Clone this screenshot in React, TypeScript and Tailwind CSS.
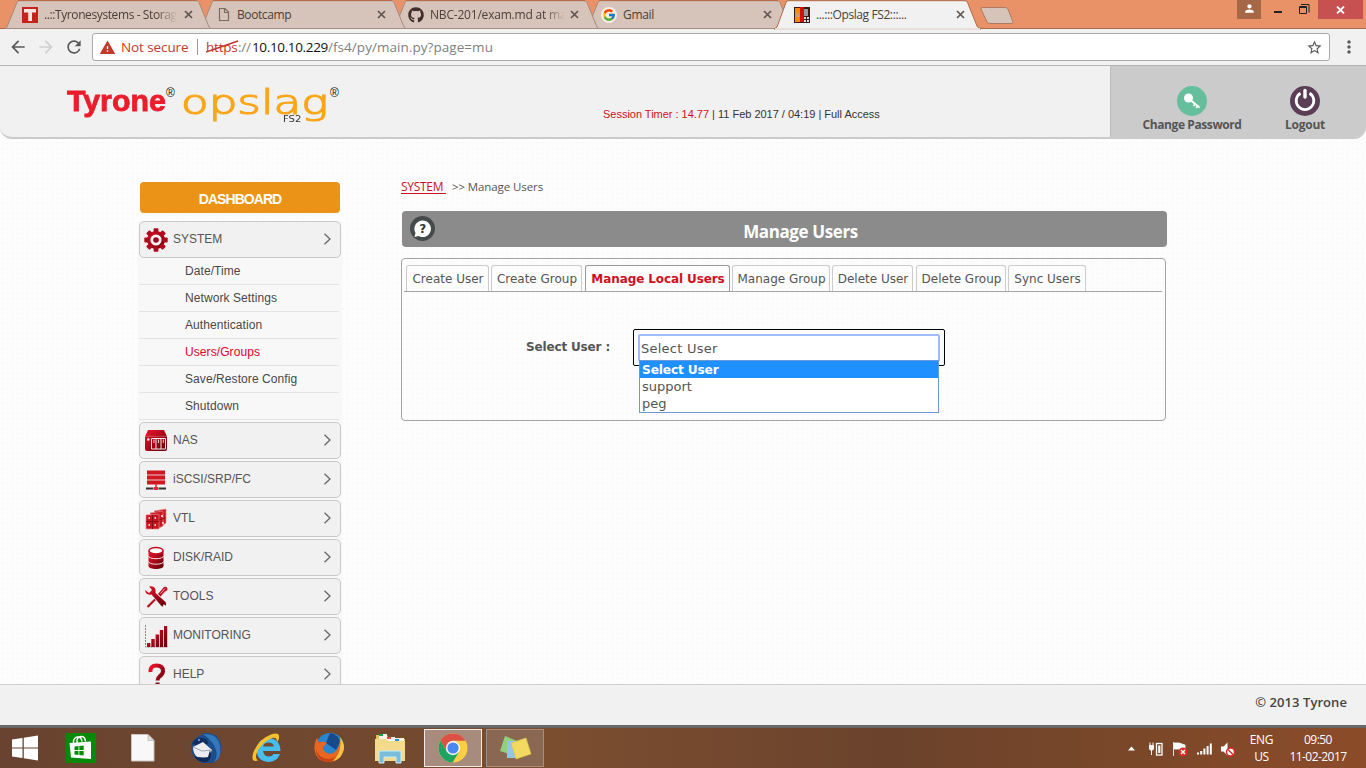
import React from "react";
import { MdArrowBack, MdArrowForward, MdRefresh, MdWarning, MdStarBorder, MdMoreVert, MdPerson } from "react-icons/md";
import { FaGithub } from "react-icons/fa";
import { FcGoogle } from "react-icons/fc";

const ui = "font-['Open_Sans','Noto_Sans',sans-serif]";
const arial = "font-['Liberation_Sans',Arial,sans-serif]";
const verdana = "font-['DejaVu_Sans',Verdana,sans-serif]";

function CloseX() {
  return (
    <svg width="9" height="9" viewBox="0 0 9 9" className="shrink-0">
      <path d="M1 1l7 7M8 1l-7 7" stroke="#5f5551" strokeWidth="1.7" />
    </svg>
  );
}

function PageIcon() {
  return (
    <svg width="12" height="15" viewBox="0 0 12 15">
      <path d="M1.5 1.5h5.5l3.5 3.5v8.500h-9zM6.500 1.500v4h4" fill="none" stroke="#7c6b64" strokeWidth="1.2" />
    </svg>
  );
}

function TyroneFav() {
  return (
    <svg width="16" height="16" viewBox="0 0 16 16">
      <rect width="16" height="16" fill="#c5221b" />
      <path d="M2 2h12v3.500h-4V14H6.200V5.500H2z" fill="#f6e6e0" />
    </svg>
  );
}

function OpslagFav() {
  return (
    <svg width="16" height="16" viewBox="0 0 16 16">
      <rect width="16" height="16" fill="#3a1a14" />
      <rect x="1" y="1" width="5" height="14" fill="#f58a10" />
      <rect x="2.500" y="6" width="2" height="4" fill="#a8a8a8" />
      <path d="M6 0h4v15H6z" fill="#d01010" />
      <rect x="10" y="2" width="4" height="7" fill="#999" />
      <path d="M10 10h5v5h-5z" fill="#ddd" />
      <path d="M10 12.500h5M12.500 10v5" stroke="#222" strokeWidth="1" />
    </svg>
  );
}

type TabProps = { icon: React.ReactNode; title: string; width: string; layer: string; fade?: boolean; active?: boolean; tail: string; text?: string };

function BrowserTab({ icon, title, width, layer, fade, active, tail, text }: TabProps) {
  return (
    <div className={`relative h-[29px] shrink-0 ${width} ${layer}`}>
      <svg className="absolute top-0 left-[-8px] overflow-visible" width="210" height="29" viewBox="0 0 210 29">
        <path
          d={active ? "M0 29L3 27L12 2.500Q12.500 .7 14 .7H191Q193 .7 193.500 2.500L203 26Q204 28.500 207 28.500V29Z" : "M5 28.500L7 27L17 2.500Q17.500 .7 19 .7H196Q198 .7 199 2.500L209 27L211 28.500Z"}
          fill={active ? "#f1f1f1" : "#d6c3b9"}
          stroke={active ? "#b06a48" : "#a78b7e"}
        />
        {active ? <path d="M1 29H206" stroke="#f1f1f1" strokeWidth="1.600" /> : <path d="M18 .5H197" stroke="#bd6c4a" />}
      </svg>
      <div className="relative flex h-[29px] items-center pl-[14px]">
        <span className="flex w-[20px] shrink-0">{icon}</span>
        <span className={`w-[135px] shrink-0 overflow-hidden text-[12px] whitespace-pre text-[#4a3f3a] ${ui} ${text ?? ""} ${fade ? "[mask-image:linear-gradient(to_right,black_85%,transparent)]" : ""}`}>{title}</span>
        <span className={`flex ${tail}`}>
          <CloseX />
        </span>
      </div>
    </div>
  );
}

function BrowserTabs() {
  return (
    <div className="relative z-0 flex h-[29px] shrink-0 justify-between bg-[#e99167] shadow-[inset_0_-1px_0_#a5694c]">
      <div className="flex pl-[8px]">
        <BrowserTab width="w-[195px]" layer="z-[4]" icon={<TyroneFav />} title="..::Tyronesystems - Storag" fade tail="pl-[7px]" text="pl-[2px] tracking-[-0.4px]" />
        <BrowserTab width="w-[193px]" layer="z-[3]" icon={<span className="pl-px"><PageIcon /></span>} title="Bootcamp" tail="pl-[5px]" text="tracking-[-0.4px]" />
        <BrowserTab width="w-[193px]" layer="z-[2]" icon={<span className="-ml-[2px]"><FaGithub size={16} color="#402f28" /></span>} title="NBC-201/exam.md at ma" fade tail="pl-[5px]" text="tracking-[-0.2px]" />
        <BrowserTab width="w-[193px]" layer="z-[1]" icon={<span className="-ml-[2px] rounded-full bg-[#f7ece6] p-px"><FcGoogle size={14} /></span>} title="Gmail" tail="pl-[5px]" text="tracking-[-0.3px]" />
        <BrowserTab width="w-[197px]" layer="z-10" icon={<span className="-ml-[2px]"><OpslagFav /></span>} title="...:::Opslag FS2:::..." active tail="pl-[5px]" text="tracking-[-0.400px]" />
        <svg width="36" height="29" viewBox="0 0 36 29">
          <path d="M3 7.500H26Q28 7.500 29 9L34 22Q34 23.500 32 23.500H11Q9 23.500 8 22L2 9Q1.500 7.500 3 7.500Z" fill="#d6c3b9" stroke="#b07b61" />
        </svg>
      </div>
      <div className="flex pr-[3px]">
        <div className="flex h-[19px] w-[24px] items-center justify-center bg-[#a66746]">
          <MdPerson size={13} color="#fff" className="-mt-[2px]" />
        </div>
        <svg width="57" height="20" viewBox="0 0 57 20">
          <path d="M13 12h8" stroke="#222" strokeWidth="2" />
          <path d="M38.500 6.500h7v7h-7zM38 7.500h8M40 4.500h8v8" fill="none" stroke="#222" />
        </svg>
        <div className="flex h-[19px] w-[45px] items-center justify-center bg-[#c75050]">
          <svg width="9" height="8" viewBox="0 0 9 8">
            <path d="M1 .5l7 7M8 .5l-7 7" stroke="#fff" strokeWidth="1.800" />
          </svg>
        </div>
      </div>
    </div>
  );
}

function Toolbar() {
  return (
    <div className="flex h-[37px] shrink-0 items-center border-b border-[#b6b4b6] bg-[#f1f1f1] pl-[8px]">
      <MdArrowBack size={20} color="#5a5a5a" />
      <MdArrowForward size={20} color="#cfcfcf" className="ml-[8px]" />
      <MdRefresh size={20} color="#5a5a5a" className="ml-[8px]" />
      <div className={`ml-[8px] flex h-[28px] w-[1238px] items-center rounded-[3px] border border-[#a9a9a9] bg-white text-[14px] whitespace-nowrap ${ui}`}>
        <MdWarning size={17} color="#c5392b" className="ml-[6px]" />
        <span className="ml-[5px] w-[76px] text-[13.500px] tracking-[-0.100px] text-[#c5392b]">Not secure</span>
        <span className="h-[16px] w-px bg-[#9b9b9b]" />
        <span className="relative ml-[8px] w-[32px] text-[13.500px] tracking-[-0.200px] text-[#c5392b]">
          https
          <svg className="absolute top-0 left-0" width="34" height="20" viewBox="0 0 34 20">
            <path d="M0 15L32 4" stroke="#c5392b" strokeWidth="1.600" />
          </svg>
        </span>
        <span className="w-[14px] text-[13.500px] tracking-[-0.300px] text-[#808080]">://</span>
        <span className="w-[76px] text-[13.500px] tracking-[-0.350px] text-[#111]">10.10.10.229</span>
        <span className="text-[13.500px] tracking-[0.050px] text-[#808080]">/fs4/py/main.py?page=mu</span>
        <MdStarBorder size={17} color="#5a5a5a" className="mr-[6px] ml-auto" />
      </div>
      <MdMoreVert size={20} color="#5a5a5a" className="ml-[9px]" />
    </div>
  );
}

function SiteHeader() {
  return (
    <div className="flex h-[73px] shrink-0 overflow-hidden rounded-b-[12px] border-b-2 border-[#cbcbcb] bg-[#f1f1f1]">
      <div className="flex w-[536px] pl-[67px]">
        <div className={`flex h-[40px] w-[114px] items-start pt-[17px] text-[30px] leading-[36px] font-bold text-[#ed1c2b] ${arial}`}>
          <span className="w-[99px]">
            <span className="inline-block origin-left scale-x-[1.01] [-webkit-text-stroke:0.8px_#ed1c2b]">Tyrone</span>
          </span>
          <span className="pt-[4px] text-[12px] leading-[12px] font-normal text-[#111]">®</span>
        </div>
        <div className={`flex flex-col pt-[18px] ${verdana}`}>
          <div className="flex h-[31px]">
            <span className="w-[149px] text-[33px] leading-[38px] font-extralight text-[#faa61a]">
              <span className="inline-block origin-left scale-x-[1.37] [-webkit-text-stroke:1.2px_#faa61a]">opslag</span>
            </span>
            <span className={`pt-[3px] text-[12px] leading-[12px] font-normal text-[#111] ${arial}`}>®</span>
          </div>
          <span className="pl-[102px] text-[8px] leading-[10px] text-[#333]">
            <span className="inline-block origin-left scale-x-[1.250]">FS2</span>
          </span>
        </div>
      </div>
      <div className={`w-[574px] shrink-0 pt-[42px] pl-[67px] text-[11px] leading-[13px] tracking-[-0.015px] whitespace-pre text-[#333] ${arial}`}>
        <span className="text-[#d0101e]">Session Timer : 14.77</span> | 11 Feb 2017 / 04:19 | Full Access
      </div>
      <div className={`flex grow border-l border-[#bbb] bg-[#cbcbcb] pt-[20px] text-[12px] leading-[16px] font-bold text-[#555] ${ui}`}>
        <div className="ml-[26px] flex w-[110px] flex-col items-center">
          <svg width="30" height="30" viewBox="0 0 30 30">
            <circle cx="15" cy="15" r="15" fill="#66bf9c" />
            <circle cx="11.500" cy="12" r="4.500" fill="#fff" />
            <path d="M14 14.500l8.500 7M18 18l-1.500 2M20.500 20l-1.300 2" stroke="#fff" strokeWidth="1.800" />
          </svg>
          <span className="mt-px text-[12px] tracking-[-0.400px] whitespace-nowrap">Change Password</span>
        </div>
        <div className="ml-[18px] flex w-[80px] flex-col items-center">
          <svg width="30" height="30" viewBox="0 0 30 30">
            <circle cx="15" cy="15" r="15" fill="#5b3e55" />
            <path d="M10.500 7.200a8.800 8.800 0 1 0 9 0" fill="none" stroke="#fff" strokeWidth="2.800" />
            <path d="M15 4.500v6.500" stroke="#fff" strokeWidth="3.400" strokeLinecap="round" />
          </svg>
          <span className="mt-px tracking-[-0.250px]">Logout</span>
        </div>
      </div>
    </div>
  );
}

function RedGradient({ id }: { id: string }) {
  return (
    <linearGradient id={id} x1="0" y1="0" x2="1" y2="1">
      <stop offset="0" stopColor="#f3142c" />
      <stop offset="1" stopColor="#5c0008" />
    </linearGradient>
  );
}

const glyphs: Record<string, React.ReactNode> = {
  SYSTEM: (
    <>
      <g fill="url(#gSYSTEM)">
        <circle cx="12" cy="12" r="9" />
      </g>
      <g fill="#b00a1c">
        {[0, 45, 90, 135, 180, 225, 270, 315].map((a) => (
          <rect key={a} x="9.600" y="0.300" width="4.800" height="5" rx="1" transform={`rotate(${a} 12 12)`} />
        ))}
      </g>
      <circle cx="12" cy="12" r="5.600" fill="#f3f3f3" />
      <circle cx="12" cy="12" r="2.800" fill="#a00818" />
    </>
  ),
  NAS: (
    <>
      <path d="M4 1h16l3 6.500V20a2 2 0 0 1-2 2H3a2 2 0 0 1-2-2V7.500z" fill="url(#gNAS)" />
      <path d="M1 7.300h22" stroke="#d88" strokeWidth=".5" />
      <path d="M7.500 9.500h14V20h-14zM12 9.500V20M17 9.500V20" fill="none" stroke="#f5e8e8" strokeWidth="1" />
      <path d="M10 10.500V14M14.500 10.500V14M19.300 10.500V14" stroke="#f5e8e8" strokeWidth=".9" />
      <circle cx="4.300" cy="10.500" r="1.200" fill="#fff" />
    </>
  ),
  "iSCSI/SRP/FC": (
    <>
      <path d="M3 2.500h18v4H3zM3 7.500h18v4H3zM3 12.500h18v4H3z" fill="#cf1722" />
      <path d="M3 7h18M3 12h18" stroke="#dc5c62" strokeWidth="1" />
      <path d="M12 16v5" stroke="#e33" strokeWidth="1.600" />
      <path d="M2 20.500h7.500M14.500 20.500H22" stroke="#333" strokeWidth="2.200" />
      <rect x="10" y="19" width="4" height="3" fill="#e02a30" />
    </>
  ),
  VTL: (
    <>
      <path d="M10 4l12-2v14l-3 2M6 6l13-2v15l-4 2M2 8l13-1v15H2z" fill="#c81620" stroke="#e58a8a" strokeWidth=".7" />
      <path d="M2 14.500h13M8.500 8v14M15 13l6-2" stroke="#7e0d14" strokeWidth=".9" />
      <path d="M4.500 11h1.500M10.500 11h1.500M4.500 18h1.500M10.500 18h1.500" stroke="#fff" strokeWidth="1.500" />
      <circle cx="18" cy="9" r="1" fill="#fff" />
      <circle cx="19" cy="16" r=".9" fill="#fff" />
    </>
  ),
  "DISK/RAID": (
    <>
      <path d="M4.500 4.500v15.500c0 4 15 4 15 0V4.500z" fill="url(#gDISKRAID)" />
      <ellipse cx="12" cy="4.700" rx="7" ry="3.200" fill="#fff" stroke="#c40e20" strokeWidth="1.400" />
      <path d="M4.500 10c0 3.600 15 3.600 15 0M4.500 15.500c0 3.600 15 3.600 15 0" fill="none" stroke="#f3dede" strokeWidth="1" />
    </>
  ),
  TOOLS: (
    <>
      <path d="M3.500 22L11 14.500" stroke="#b80e1d" strokeWidth="2.200" />
      <path d="M14 9L20 2q3.500-1 3.500 3l-7 6.500z" fill="#b80e1d" />
      <path d="M16.500 8.500l4.500-5M18.300 9.500l4-4" stroke="#fff" strokeWidth=".7" />
      <path d="M1 5l4 3 3-3-3-3.500q5-1 6.500 3v3.500l10 9q1.500 3-1 4t-3.500-.5l-9.500-11q-6 1-6.500-4.500z" fill="url(#gTOOLS)" />
      <circle cx="20" cy="20.500" r="1" fill="#fff" />
    </>
  ),
  MONITORING: (
    <>
      <path d="M1.500 1v22H24" fill="none" stroke="#888" strokeWidth="1" strokeDasharray="2 1" />
      <path d="M3 19h3.400v4H3zM7.300 15h3.400v8H7.300zM11.600 10.500H15V23h-3.400zM15.800 6h3.400v17h-3.400zM20 2h3.200v21H20z" fill="url(#gMONITORING)" />
    </>
  ),
  HELP: <path d="M6.500 9Q6 2.500 12.500 2.500T19 8q0 3-3.500 5.500-2 1.500-2 4M13.500 19.500v4" fill="none" stroke="url(#gHELP)" strokeWidth="4" />,
};

function MenuItem({ label }: { label: string }) {
  return (
    <div className="flex h-[37px] w-[202px] shrink-0 items-center rounded-[5px] border border-[#c9c9c9] bg-[#f1f1f1] pr-[9px] pl-[4px]">
      <svg className="mt-px" width="24" height="24" viewBox="0 0 24 24">
        <defs>
          <RedGradient id={"g" + label.replace("/", "")} />
        </defs>
        {glyphs[label]}
      </svg>
      <span className={`ml-[5px] text-[12px] leading-[15px] text-[#555] ${arial}`}>{label}</span>
      <svg className="mb-[2px] ml-auto" width="8" height="12" viewBox="0 0 8 12">
        <path d="M1.500 .8L7 6L1.500 11.200" fill="none" stroke="#666" strokeWidth="1.300" />
      </svg>
    </div>
  );
}

const subItems = ["Date/Time", "Network Settings", "Authentication", "Users/Groups", "Save/Restore Config", "Shutdown"];
const lowerItems = ["NAS", "iSCSI/SRP/FC", "VTL", "DISK/RAID", "TOOLS", "MONITORING", "HELP"];

function Sidebar() {
  return (
    <div className="ml-[138px] flex w-[204px] shrink-0 flex-col pt-[43px]">
      <div className={`mx-[2px] flex h-[31px] shrink-0 items-center justify-center rounded-[4px] bg-[#eb9316] pt-[4px] text-[14px] font-bold text-white ${arial}`}>
        <span className="tracking-[-0.950px]">DASHBOARD</span>
      </div>
      <div className="mt-[8px] flex flex-col bg-[#f8f8f8] pl-px">
        <MenuItem label="SYSTEM" />
        <div className="mb-[2px] w-[200px]">
          {subItems.map((s) => (
            <div key={s} className={`h-[27px] border-b border-[#e4e4e4] pt-[6px] pl-[46px] text-[12px] leading-[15px] tracking-[0.080px] ${arial} ${s === "Users/Groups" ? "text-[#e0052b]" : "text-[#484848]"}`}>
              {s}
            </div>
          ))}
        </div>
        <div className="flex flex-col gap-[2px]">
          {lowerItems.map((s) => (
            <MenuItem key={s} label={s} />
          ))}
        </div>
      </div>
    </div>
  );
}

const pageTabs = [
  { label: "Create User", box: "w-[83px] mr-[2px]" },
  { label: "Create Group", box: "w-[91px] mr-[3px]" },
  { label: "Manage Local Users", box: "w-[145px] mr-[2px]" },
  { label: "Manage Group", box: "w-[98px] mr-[2px]" },
  { label: "Delete User", box: "w-[81px] mr-[3px]" },
  { label: "Delete Group", box: "w-[90px] mr-[2px]" },
  { label: "Sync Users", box: "w-[78px]" },
];

function Content() {
  return (
    <div className="ml-[59px] flex w-[766px] flex-col pt-[40px]">
      <div className={`h-[32px] text-[12px] leading-[15px] whitespace-pre text-[#555] ${ui}`}>
        <span className="inline-block w-[51px]">
          <span className="tracking-[-0.300px] text-[#d0101e] underline underline-offset-2">{"SYSTEM "}</span>
        </span>
        <span className="text-[11.500px] tracking-[-0.100px]">{">> Manage Users"}</span>
      </div>
      <div className="ml-px flex h-[36px] w-[765px] items-center rounded-[4px] bg-[#8b8b8b] pl-[8px]">
        <svg width="26" height="26" viewBox="0 0 26 26">
          <circle cx="12.500" cy="12.500" r="12.500" fill="#454b4a" />
          <path d="M12.500 4.500a8.300 8.300 0 1 1-4 15.500l-4 1 1-4A8.300 8.300 0 0 1 12.500 4.500z" fill="#fff" />
          <text x="12.700" y="17" textAnchor="middle" className={`text-[12px] font-bold ${verdana}`} fill="#333">?</text>
        </svg>
        <span className={`w-[731px] pt-[5px] pr-[2px] text-center text-[17px] font-bold text-white ${ui}`}>
          <span className="tracking-[-0.400px]">Manage Users</span>
        </span>
      </div>
      <div className={`mt-[11px] h-[163px] w-[765px] rounded-[4px] border border-[#a3a3a3] pt-[6px] text-[12px] text-[#555] ${verdana}`}>
        <div className="ml-[2px] flex h-[27px] w-[758px] border-b border-[#a3a3a3] pl-[2px]">
          {pageTabs.map((t) => (
            <div
              key={t.label}
              className={`h-[26px] shrink-0 rounded-t-[3px] border border-b-0 pt-[6px] pl-px text-center text-[12px] leading-[15px] whitespace-nowrap ${t.box} ${t.label === "Manage Local Users" ? "border-[#999] font-bold tracking-[-0.100px] text-[#d0101e]" : "border-[#ccc]"}`}
            >
              {t.label}
            </div>
          ))}
        </div>
        <div className="flex pt-[37px]">
          <span className="mt-[11px] w-[231px] pl-[124px] text-[12px] leading-[15px] font-bold tracking-[-0.150px]">Select User :</span>
          <div className="h-[37px] w-[312px] rounded-[2px] border border-black bg-white p-[4px]">
            <div className="relative h-[28px] w-[302px] rounded-[2px] border-2 border-[#9fbdf8] pt-[4px] pl-px text-[13px] leading-[17px]">
              <span className="tracking-[0.250px]">Select User</span>
              <div className="absolute top-[24px] left-[-1px] w-[300px] border border-[#6b98d8] bg-white text-[13px] leading-[17px]">
                <div className="h-[17px] bg-[#1e90ff] pl-[2px] text-[12.200px] leading-[18px] font-bold tracking-[-0.150px] text-white">Select User</div>
                <div className="h-[17px] pl-[2px]">support</div>
                <div className="h-[17px] pl-[2px]">peg</div>
              </div>
            </div>
          </div>
        </div>
      </div>
    </div>
  );
}

function ChromeIcon() {
  return (
    <svg width="30" height="30" viewBox="0 0 30 30">
      <circle cx="15" cy="15" r="14.500" fill="#ffce44" />
      <path d="M2.400 7.800A14.500 14.500 0 0 1 27.600 7.800H15L8.700 18.600z" fill="#dd5044" />
      <path d="M2.400 7.800A14.500 14.500 0 0 0 14.500 29.500L21.300 18.600 15 15 8.700 18.600z" fill="#1da362" />
      <circle cx="15" cy="15" r="7.200" fill="#f4f4f4" />
      <circle cx="15" cy="15" r="5.600" fill="#4a87f0" />
    </svg>
  );
}

function NotesIcon() {
  return (
    <svg width="34" height="30" viewBox="0 0 34 30">
      <path d="M7 3l12 5-5 14L2 18z" fill="#8fd07a" />
      <path d="M9 8h13v17H9z" fill="#93c5ea" />
      <path d="M13 10l15-5 5 16-15 5z" fill="#f2da62" stroke="#dfc148" strokeWidth=".7" />
    </svg>
  );
}

function Taskbar() {
  return (
    <div className="flex h-[43px] shrink-0 items-center border-t-[3px] border-[#686868] bg-[linear-gradient(to_right,#694330,#72492f_28%,#7b4e30_40%,#6b432c_65%,#7a4729_83%,#8c4c2a)] pl-[12px]">
      <svg className="w-[54px] shrink-0" width="54" height="26" viewBox="0 0 54 26">
        <path d="M0 4.500l10.500-1.500v9.500H0zM11.800 2.800L26 .5v12H11.800zM0 13.500h10.500V23L0 21.500zM11.800 13.500H26v12l-14.200-2.200z" fill="#fff" />
      </svg>
      <svg className="mr-[35px] shrink-0" width="30" height="30" viewBox="0 0 30 30">
        <rect width="30" height="30" fill="#078a07" />
        <path d="M3.500 10L25 8.500v17.500L5 24.500z" fill="#fff" />
        <path d="M7.500 10.500V8q1-4 4.500-4t4 4.500M11 10V7q1-3.500 4.500-3.500t4 5" stroke="#fff" strokeWidth="1.400" fill="none" />
        <path d="M8.500 13.500l4-.4v4h-4zM13.300 13l4.400-.4v4.500h-4.400zM8.500 18h4v4l-4-.4zM13.300 18h4.400v4.500l-4.400-.4z" fill="#078a07" />
      </svg>
      <svg className="mr-[35px] shrink-0" width="24" height="28" viewBox="0 0 24 28">
        <path d="M.5.500h16.500l6 6V27H.5z" fill="#f8f8f8" stroke="#cbc4c0" />
        <path d="M17 .5v6h6z" fill="#dedede" stroke="#aaa" strokeWidth=".6" />
      </svg>
      <svg className="mr-[29px] shrink-0" width="32" height="32" viewBox="0 0 32 32">
        <path d="M3 9Q7 4 12 3q-1-2 2-2 17-1 17 15 0 11-8 15H12Q1 26 1 15q0-4 2-6z" fill="#1c4d8a" />
        <path d="M13 2q15-1 17 12t-6 16q4-6 2-12-3-9-13-16z" fill="#3178bd" />
        <path d="M2 12Q5 5 12 6t6 6l-8 2z" fill="#122f63" />
        <path d="M3 15l10-5 9 8-4 8-11-1q-4-4-4-10z" fill="#ededf0" />
        <path d="M3 15l9 4 10-1" fill="none" stroke="#a0a5af" />
        <path d="M4 24q7 3 14 1l2-7q3 8-3 12Q8 31 4 24z" fill="#122958" />
        <circle cx="9" cy="8" r="1" fill="#7db3e0" />
      </svg>
      <svg className="mr-[30px] shrink-0" width="32" height="32" viewBox="0 0 32 32">
        <path d="M29 22q-3 8-12 8-11-1-11.500-12.500Q7 6.500 17 6q12 .5 12.500 13H12q1 5.500 6 5.500 3 0 4.500-2.500z" fill="#46bef0" />
        <path d="M12 14.500h11q-1-4-5.500-4t-5.500 4z" fill="#744a2f" />
        <path d="M7 28.500Q-1 31 2.500 20 8 7 20 2.500q9-3 8 3.500 0 2-2 4 0-5-5-4Q13 9 7 18q-4 8 0 10.500z" fill="#f5c12c" />
      </svg>
      <svg className="mr-[29px] shrink-0" width="32" height="32" viewBox="0 0 32 32">
        <circle cx="17" cy="15" r="14" fill="#2a86cc" />
        <path d="M17 1q9 2 10 9l-4 8-10-7z" fill="#164a8d" />
        <path d="M27 8q6 8 1 15-4 7-13 7Q3 29 1.500 18 1 10 4 6l2 5q3-3 8 0l-3 3q-2 2 0 5 4 4 9 2 6-2 7-13z" fill="#e8661f" />
        <path d="M27 5q6 8 3 15-3 8-10 9 6-6 7-13 1-6 0-11z" fill="#fbc33f" />
        <path d="M3 17q2 9 12 10 5 0 8-2-4 6-11 5Q3 27 3 17z" fill="#c94415" />
      </svg>
      <svg className="mr-[17px] shrink-0" width="33" height="32" viewBox="0 0 33 32">
        <path d="M2 3h11l2 4h16v21H2z" fill="#e5bf5d" />
        <path d="M5 2h8v5H5zM12 5h9v5h-9zM20 6h10v5H20z" fill="#f6f3e7" />
        <path d="M5 3h4" stroke="#16a050" strokeWidth="2" />
        <path d="M13 6h4" stroke="#dc5140" strokeWidth="2" />
        <path d="M21 8h4" stroke="#2f8ce5" strokeWidth="2" />
        <path d="M1 7h11l2 2h17v20H1z" fill="#f3db8b" />
        <path d="M5 31V19h22v12h-5v-6H10v6z" fill="#79bddb" stroke="#c9edf8" />
      </svg>
      <div className="mr-[4px] flex h-[38px] w-[58px] shrink-0 items-center justify-center border border-[#f2ebe7] bg-[#a78b7c]">
        <ChromeIcon />
      </div>
      <div className="flex h-[38px] w-[58px] shrink-0 items-center justify-center border border-[#aa8c7b] bg-[#8a6753]">
        <NotesIcon />
      </div>
      <div className={`mr-[17px] ml-auto flex items-center text-[12px] leading-[17px] text-white ${ui}`}>
        <svg className="mt-[1px] mr-[13px]" width="108" height="16" viewBox="0 0 108 16">
          <path d="M1 9.500L4.500 5.500L8 9.500z" fill="#fff" />
          <path d="M22.500 4.500h4v3.500l-1.500 1.500h-1l-1.500-1.500zM23 1.500v3M26 1.500v3M24.500 9v5" fill="#fff" stroke="#fff" />
          <rect x="29.500" y="2.500" width="5.500" height="11.500" fill="#7a4729" stroke="#fff" strokeWidth="1.300" />
          <rect x="31.200" y="4.500" width="2.200" height="7.500" fill="#fff" />
          <path d="M46.500 1v14M47 2h5l6 2v6l-6-2h-5z" fill="#fff" stroke="#fff" strokeWidth=".8" />
          <circle cx="56" cy="11" r="4.500" fill="#dc2a26" />
          <path d="M54 9l4 4M58 9l-4 4" stroke="#fff" strokeWidth="1.400" />
          <path d="M70 11.500h2v2h-2zM73.200 10h2v3.500h-2zM76.400 7.500h2v6h-2zM79.600 5h2v8.500h-2zM82.800 2.500h2v11h-2z" fill="#fff" />
          <path d="M94 5.500h2.500l4-4v13l-4-4H94z" fill="#fff" />
          <circle cx="103.500" cy="11" r="4" fill="#fff" stroke="#dc2a26" strokeWidth="1.500" />
          <path d="M101 8.500l5 5" stroke="#dc2a26" strokeWidth="1.500" />
        </svg>
        <div className="w-[27px] text-center tracking-[-0.300px] whitespace-nowrap">ENG<br />US</div>
        <div className="ml-[13px] w-[61px] pr-px text-center tracking-[-0.550px] whitespace-nowrap">09:50<br />11-02-2017</div>
      </div>
    </div>
  );
}

export default function App() {
  return (
    <div className="flex h-[768px] w-[1366px] flex-col overflow-hidden bg-[#fcfcfc]">
      <BrowserTabs />
      <Toolbar />
      <div className="flex h-[618px] shrink-0 flex-col bg-[#fdfdfd] bg-[radial-gradient(circle,#fafafa_1px,transparent_1.5px)] bg-[size:5px_5px]">
        <SiteHeader />
        <div className="flex h-[545px] shrink-0 overflow-hidden">
          <Sidebar />
          <Content />
        </div>
      </div>
      <div className={`flex h-[41px] shrink-0 items-start justify-end border-t border-[#cfcfcf] bg-[#f1f1f1] pt-[9px] pr-[19px] text-[13px] leading-[17px] font-semibold tracking-[0.070px] text-[#444] ${ui}`}>
        © 2013 Tyrone
      </div>
      <Taskbar />
    </div>
  );
}
